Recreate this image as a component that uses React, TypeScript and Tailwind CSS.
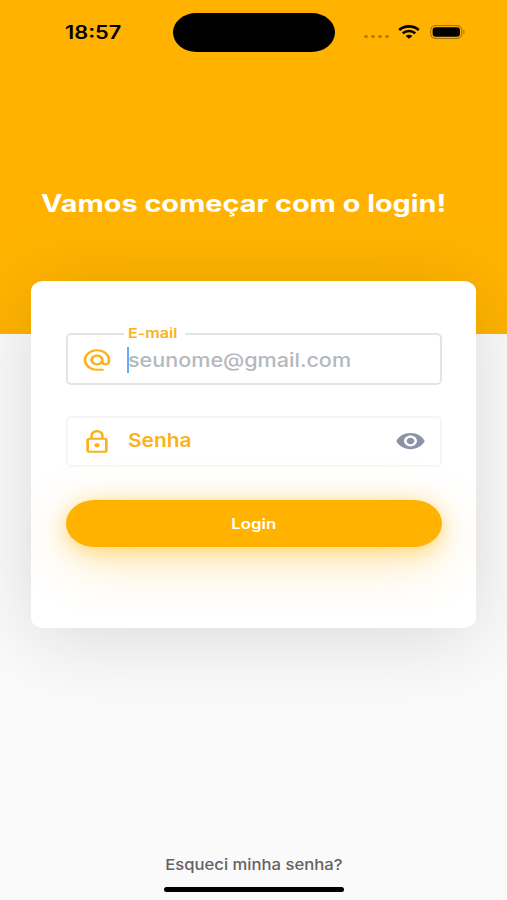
import { MdAlternateEmail, MdLockOutline, MdVisibility } from "react-icons/md"

function StatusBar() {
  return (
    <div className="flex h-16 items-center text-black">
      <div className="w-[173px] pl-[65px]">
        <span className="inline-block origin-left translate-y-px scale-x-[1.21] text-[18px] leading-none font-semibold">18:57</span>
      </div>
      <div className="h-[39px] w-[162px] rounded-[24px/20px] bg-black" />
      <div className="flex items-center pl-[29px]">
        <div className="mt-[9px] flex gap-[3px]">
          <span className="h-[3px] w-1 rounded-full bg-black/30" />
          <span className="h-[3px] w-1 rounded-full bg-black/30" />
          <span className="h-[3px] w-1 rounded-full bg-black/30" />
          <span className="h-[3px] w-1 rounded-full bg-black/30" />
        </div>
        <svg className="ml-[9px] h-[14px] w-[22px]" viewBox="0 0 22 14" fill="none" stroke="currentColor">
          <path d="M1.2 5C6.8.2 15.2.2 20.8 5" strokeWidth="2.7" />
          <path d="M4.7 8.3C8.4 5.3 13.6 5.3 17.3 8.3" strokeWidth="2.5" />
          <path d="M11 13.8 7.6 11C9.5 9.4 12.5 9.4 14.4 11Z" fill="currentColor" stroke="none" />
        </svg>
        <svg className="ml-2.5 h-[14px] w-9" viewBox="0 0 36 14" fill="none">
          <rect x="0.8" y="0.6" width="31" height="12.8" rx="4.5" ry="3.8" stroke="black" strokeOpacity="0.4" />
          <rect x="2.6" y="2.2" width="27.4" height="9.6" rx="3" fill="black" />
          <path d="M33.4 5v4c1.5-.6 1.5-3.4 0-4Z" fill="black" fillOpacity="0.45" />
        </svg>
      </div>
    </div>
  )
}

export default function App() {
  return (
    <div className="flex h-[900px] w-full flex-col overflow-hidden bg-[#fafafa] font-['Inter',sans-serif]">
      <header className="h-[334px] shrink-0 bg-[#ffb300]">
        <StatusBar />
        <h1 className="mt-[124px] ml-[41px] w-max origin-left scale-x-[1.2] text-[24px] leading-[32px] font-bold text-white">
          Vamos começar com o login!
        </h1>
      </header>

      <main className="relative mx-auto -mt-[53px] h-[347px] w-[445px] shrink-0 rounded-[12px/10px] bg-white px-[34.5px] pt-[52px] shadow-[0_10px_80px_rgba(0,0,0,0.13)]">
        <div className="relative flex h-[52px] items-center rounded-[5px] border-2 border-[#e2e5e7] pt-px pl-[13px]">
          <label className="absolute -top-[12px] left-[56px] flex h-5 w-[61px] items-center bg-white pl-[4px]">
            <span className="origin-left scale-x-[1.24] text-[13px] leading-5 font-semibold text-[#fbb216]">E-mail</span>
          </label>
          <MdAlternateEmail className="h-[26px] w-8 text-[#fbb216]" preserveAspectRatio="none" />
          <span className="ml-[14px] h-[26px] w-0.5 bg-[#64adf5]" />
          <span className="w-max origin-left -translate-x-px translate-y-px scale-x-[1.135] text-[19px] leading-6 font-medium text-[#b4b8be]">
            seunome@gmail.com
          </span>
        </div>

        <div className="mt-[31px] flex h-[51px] items-center rounded-[5px] border-2 border-[#f6f6f7] pr-[14px] pl-[13px]">
          <MdLockOutline className="h-[26px] w-8 text-[#fbb216]" preserveAspectRatio="none" />
          <span className="ml-[15px] origin-left -translate-y-px scale-x-[1.1] text-[19px] leading-6 font-semibold text-[#fbb216]">
            Senha
          </span>
          <MdVisibility className="ml-auto h-[26px] w-[31px] -translate-y-px text-[#8c93a8]" preserveAspectRatio="none" />
        </div>

        <button
          type="button"
          className="mt-[33px] flex h-[47px] w-full items-center justify-center rounded-[29px/24px] bg-[#ffb300] shadow-[0_14px_52px_rgba(255,179,0,0.3),0_4px_20px_rgba(255,179,0,0.45)]"
        >
          <span className="scale-x-[1.2] text-[14px] leading-5 font-semibold text-white">Login</span>
        </button>
      </main>

      <footer className="mt-auto flex flex-col items-center pb-[8px]">
        <a href="#" className="scale-x-[1.11] text-[15px] leading-5 font-medium text-[#626262]">
          Esqueci minha senha?
        </a>
        <div className="mt-[12px] h-[5px] w-[180px] rounded-full bg-black" />
      </footer>
    </div>
  )
}
